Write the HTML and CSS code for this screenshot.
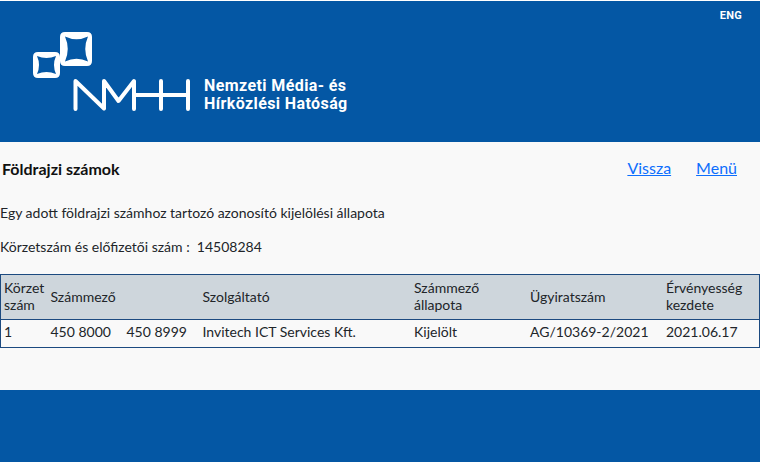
FILE: index.html
```html
<!DOCTYPE html>
<html lang="hu">
  <head>
    <meta name="viewport" content="width=device-width, initial-scale=1.0" />
    <title>Földrajzi számok</title>
    <link rel="stylesheet" href="styles.css">
  </head>
  <body>
    <div class="page">
      <header class="header">
        <a class="lang" href="#">ENG</a>
        <div class="logo">
          <svg class="logo-mark" width="160" height="85" viewBox="0 0 160 85">
            <path class="box" d="M35 2h22q5 0 5 5v24q0 5-5 5h-22q-5 0-5-5v-24q0-5 5-5zM35 6.500Q46.500 12 58 6.500Q52.500 19 58 31.500Q46.500 26 35 31.500Q40.500 19 35 6.500z" />
            <path class="box" d="M8 22h17q5 0 5 5v16q0 5-5 5h-17q-5 0-5-5v-16q0-5 5-5zM7 26Q16.500 30 26 26Q22 35 26 44Q16.500 40 7 44Q11 35 7 26z" />
            <path class="line" d="M45.500 79V51L74 78.500V51L88.500 71L104 51V79M104 65H158M131 51V79M158 51V79" />
          </svg>
          <div class="logo-text">Nemzeti Média- és<br />Hírközlési Hatóság</div>
        </div>
      </header>
      <main class="content">
        <div class="title-row">
          <h1>Földrajzi számok</h1>
          <nav class="links">
            <a href="#">Vissza</a>
            <a href="#">Menü</a>
          </nav>
        </div>
        <p class="desc">Egy adott földrajzi számhoz tartozó azonosító kijelölési állapota</p>
        <p class="query">Körzetszám és előfizetői szám :&nbsp; 14508284</p>
        <table class="numbers">
          <thead>
            <tr>
              <th class="c-area">Körzet szám</th>
              <th class="c-from">Számmező</th>
              <th class="c-to"></th>
              <th class="c-provider">Szolgáltató</th>
              <th class="c-state">Számmező állapota</th>
              <th class="c-doc">Ügyiratszám</th>
              <th class="c-date">Érvényesség kezdete</th>
            </tr>
          </thead>
          <tbody>
            <tr>
              <td>1</td>
              <td>450 8000</td>
              <td>450 8999</td>
              <td>Invitech ICT Services Kft.</td>
              <td>Kijelölt</td>
              <td>AG/10369-2/2021</td>
              <td>2021.06.17</td>
            </tr>
          </tbody>
        </table>
      </main>
      <footer class="footer"></footer>
    </div>
  </body>
</html>
```
FILE: styles.css
```css
* {
  box-sizing: border-box;
}
body {
  margin: 0;
  padding-top: 1px;
  background-color: #ffffff;
  font-family: "Lato", sans-serif;
  color: #212529;
}
.page {
  width: 760px;
}
.header {
  height: 141px;
  background-color: #0457a4;
  padding-top: 8px;
  display: flex;
  flex-direction: column;
}
.lang {
  align-self: flex-end;
  margin-right: 18px;
  color: #ffffff;
  font-family: "Roboto", sans-serif;
  font-size: 11px;
  font-weight: 700;
  line-height: 14px;
  letter-spacing: 0.3px;
  text-decoration: none;
}
.logo {
  display: flex;
  align-items: flex-end;
  margin: 7px 0 0 30px;
}
.logo-mark {
  display: block;
  flex: none;
}
.box {
  fill: #ffffff;
  fill-rule: evenodd;
}
.line {
  fill: none;
  stroke: #ffffff;
  stroke-width: 4;
  stroke-linecap: round;
  stroke-linejoin: round;
}
.logo-text {
  margin: 0 0 2px 14px;
  color: #ffffff;
  font-family: "Roboto", sans-serif;
  font-weight: 700;
  font-size: 16px;
  line-height: 18px;
  letter-spacing: 0.4px;
  white-space: nowrap;
}
.content {
  height: 248px;
  background-color: #f9f9f9;
}
.title-row {
  display: flex;
  justify-content: space-between;
  align-items: center;
  height: 53px;
  margin-bottom: 8px;
  padding: 0 23px 0 2px;
}
h1 {
  margin: 0;
  font-size: 16px;
  font-weight: 700;
  color: #111111;
}
.links {
  display: flex;
  gap: 25px;
  margin-bottom: 2px;
}
.links a {
  color: #0d6efd;
  font-size: 16px;
}
.desc,
.query {
  margin: 0;
  font-size: 14px;
  line-height: 20px;
}
.desc {
  margin-bottom: 14px;
}
.query {
  margin-bottom: 17px;
}
.numbers {
  width: 760px;
  border-collapse: collapse;
  table-layout: fixed;
  border: 1px solid #1c4a80;
  font-size: 14px;
  line-height: 17px;
}
.numbers th {
  background-color: #ced6dc;
  font-weight: 400;
  text-align: left;
  padding: 2px 3px 4px;
  height: 45px;
  border-bottom: 1px solid #1c4a80;
}
.numbers td {
  padding: 0 3px 4px;
  height: 28px;
  background-color: #f9f9f9;
}
.c-area { width: 47px; }
.c-from { width: 76px; }
.c-to { width: 76px; }
.c-provider { width: 211.5px; }
.c-state { width: 116px; }
.c-doc { width: 136px; }
.footer {
  height: 72px;
  background-color: #0457a4;
}
```
